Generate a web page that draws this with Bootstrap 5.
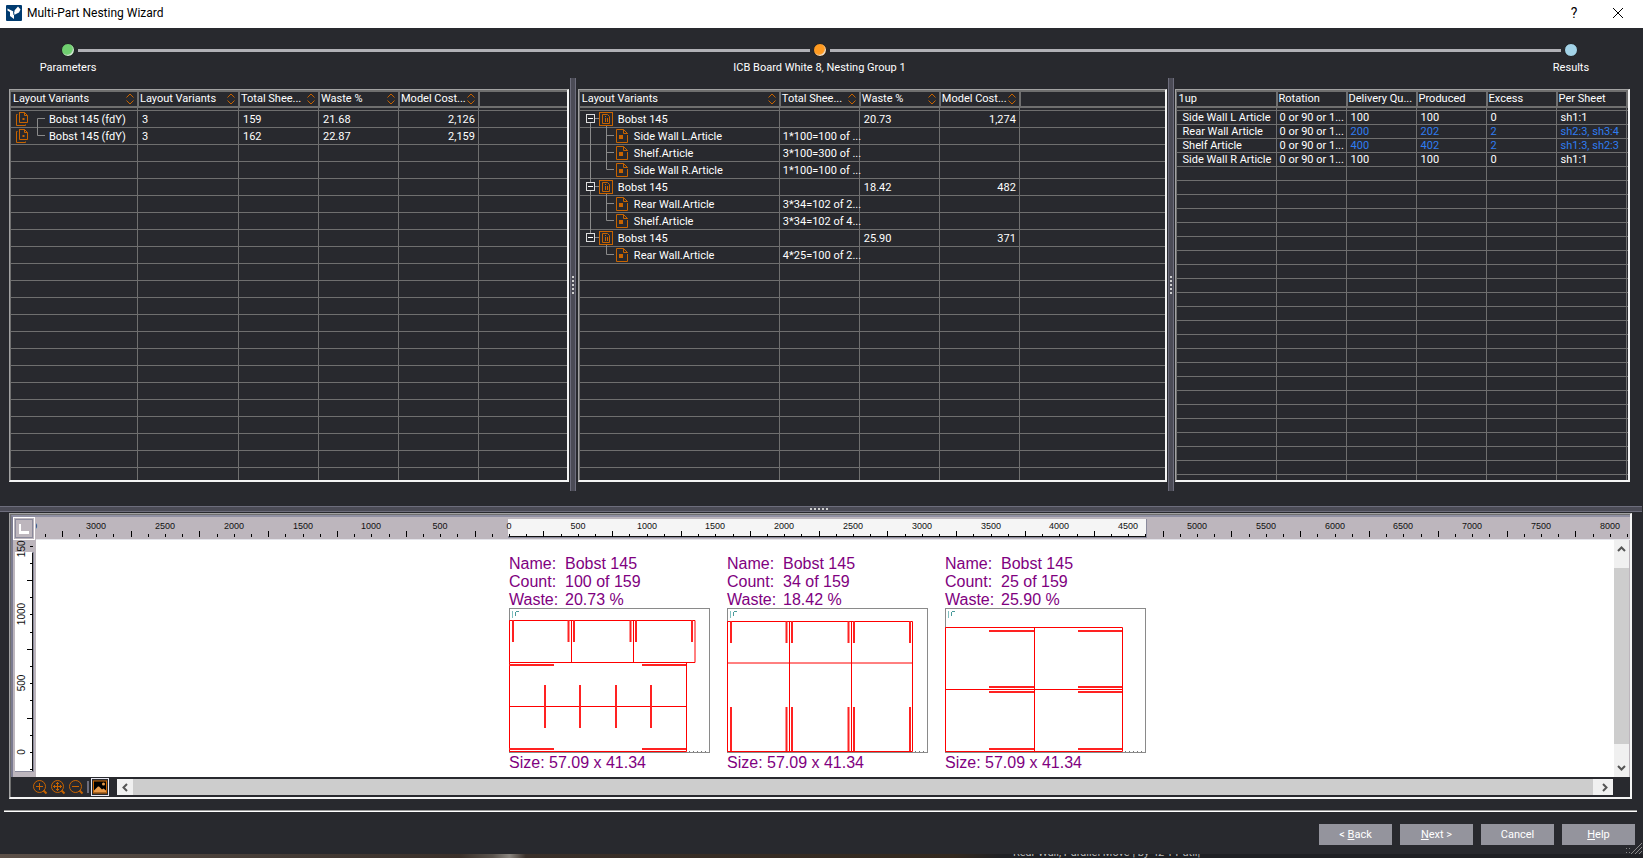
<!DOCTYPE html>
<html lang="en">
<head>
<meta charset="utf-8">
<meta name="viewport" content="width=device-width, initial-scale=1">
<title>Multi-Part Nesting Wizard</title>
<link rel="stylesheet" href="https://cdn.jsdelivr.net/npm/bootstrap@5.3.0/dist/css/bootstrap.min.css">
<style>
:root { --bg:#28292e; --grid:#6f6f6f; --edge:#a2a2a2; --mauve:#bdb6bd; }
body { background:var(--bg); color:#fff; font:11px/14px Roboto, "Liberation Sans", sans-serif; overflow:hidden; }
svg { display:block; }
button { font:inherit; }

.title-bar { height:28px; background:#fff; color:#000; padding:0 15px 3px 6px; }
.title-bar h1 { font-size:12px; line-height:16px; font-weight:400; padding-left:5px; }
.title-bar button { width:20px; height:20px; font-size:14px; line-height:20px; }
.title-bar .tools { gap:24px; }

.stepper { padding:15px 4px 3px 0; }
.stepper .track { padding:0 61px; gap:3px; }
.stepper .dot { width:14px; height:14px; border-radius:50%; border:1px solid #1e1f22; box-shadow:inset -1px -1px 1px #e8e8e8; }
.stepper .dot.done { background:#6fcf6f; }
.stepper .dot.now { background:#ff9a20; }
.stepper .dot.next { background:#a3d3e8; box-shadow:none; }
.stepper .rail { height:3px; background:#b1b1b6; }
.stepper .names { padding-top:4px; }
.stepper .names .side { width:136px; }

.split { padding:0 13px 0 9px; }
.pane { margin:11px 0 9px; border:1px solid var(--edge); border-right:2px solid #f4f4f4; border-bottom:2px solid #f4f4f4; min-width:0; overflow:hidden; }
.pane-a { flex:560 1 0; } .pane-b { flex:589 1 0; margin-left:2px; } .pane-c { flex:455 1 0; margin-left:1px; }
.bar-v { width:6px; margin-left:1px; background:#4b4b56; border:solid #6d6d7c; border-width:0 1px; }
.bar-h { height:6px; margin:15px 1px 1px 0; padding-right:4px; background:#4b4b56; border:solid #6d6d7c; border-width:1px 0; }
.grip-dots i { width:2px; height:2px; background:#d0d0d0; }
.bar-v.grip-dots, .bar-h.grip-dots { gap:2px; }

.grid { table-layout:fixed; width:100%; border-collapse:separate; border-spacing:0; white-space:nowrap; }
.grid th, .grid td { padding:0; vertical-align:middle; }
.grid th { height:18px; font-weight:400; border:solid var(--grid); border-width:2px 0 2px 2px; padding:0 3px 0 1px; line-height:14px; }
.grid th:first-child { border-left-width:1px; padding-left:2px; }
.grid td { border-left:1px solid var(--grid); border-bottom:1px solid var(--grid); padding:0 0 0 4px; line-height:13px; height:17px; }
.grid td.sum { padding-left:3px; }
.grid td.text-end { padding-right:3px; }
.grid .gap td { height:3px; }
.grid .last td { height:12px; border-bottom:0; }
.grid td.tree { padding:0; }
.grid td.tree svg { overflow:visible; flex:none; }
.grid td.tree > div { height:16px; }
.grid.dense td { height:14px; }
.grid.dense .gap td { height:3px; }
.grid.dense .last td { height:5px; }
.grid.dense td:first-child { padding-left:6px; }
.grid .stub, .grid td:last-child:empty { padding:0; }
.diff { color:#2f7df0; }

.viewer { margin:0 11px 0 9px; border:1px solid var(--edge); border-right:2px solid #f4f4f4; border-bottom:2px solid #f4f4f4; }
.viewer-in { border:solid var(--grid); border-width:1px 0 0 1px; }
.stage { display:grid; grid-template-columns:23px 1fr 16px; grid-template-rows:23px auto; background:var(--mauve); border:solid #7b7b90; border-width:2px 0 0 2px; border-top-color:#8f8fa2; }
.corner { width:22px; height:23px; background:var(--mauve); border:1px solid #fff; outline:1px solid #8a8a9c; outline-offset:-3px; padding:0; }
.ruler-x { grid-column:2 / 4; height:23px; width:100%; }
.ruler-y { width:23px; height:100%; }
.ruler-x text, .ruler-y text { font-size:10px; font-family:"Liberation Sans", sans-serif; fill:#111; text-anchor:middle; }
.ruler-x text { font-size:9px; }
.canvas { background:#fff; padding:15px 0 5px 473px; gap:16px; color:#800080; font:16px/18px "Liberation Sans", sans-serif; overflow:hidden; white-space:nowrap; min-width:0; }
.canvas dl { display:grid; grid-template-columns:56px auto; margin:0; }
.canvas dt { font-weight:400; } .canvas dd { margin:0; }
.canvas svg { width:202px; height:145px; margin:-1px 0 1px; }
.scroll { background:#f0f0f0; }
.scroll button { border:0; background:#f0f0f0; padding:0; }
.scroll .thumb { background:#cdcdcd; }
.scroll-v { width:15px; }
.scroll-v button { height:18px; } .scroll-v .thumb { margin:10px 0 15px; }
.scroll-h { height:16px; margin:2px 17px 2px 8px; }
.scroll-h button { width:16px; } .scroll-h .thumb { margin-right:4px; }
.tool-row { height:20px; padding-left:20px; }
.tool-row .tool { width:18px; height:18px; padding:0; border:0; background:none; }
.tool-row .sep { width:2px; height:12px; background:#6d6d7c; margin:0 2px; }
.tool-row .tool.on { border:1px solid #e6e6f0; }

.rule { height:2px; margin:11px 6px 12px 4px; background:#fff; border-top:1px solid #9a9a9a; }
.actions { padding-right:8px; gap:8px; }
.actions button { width:73px; height:21px; border:0; border-radius:0; background:#94949d; color:#fff; padding:1px 0 0; line-height:20px; }
.resize { width:16px; height:12px; right:1px; bottom:4px; }
.behind { height:4px; margin-top:9px; overflow:hidden; background:linear-gradient(90deg,#5c5048 0,#453c36 17%,#3a302a 28%,#5a534d 30%,#8a857f 31%,#3a302a 32%,#33291f 58%,#1f2024 61%,#1f2024 100%); color:#b8b8b8; }
.behind span { margin-left:1013px; margin-top:-7px; line-height:11px; white-space:nowrap; }
</style>
</head>
<body>
<header class="title-bar d-flex align-items-center">
  <svg width="16" height="16" viewBox="0 0 16 16" aria-hidden="true"><rect width="16" height="16" rx="1" fill="#003b70"/><path d="M1.500 3.500L7.500 6.500L12 1.500L14.500 4.500L13 7.500L8 10V14L4 11V7L1.500 5.500z" fill="#fff"/><path d="M7.500 1L8 7M8 10L7.500 6.500" stroke="#003b70"/></svg>
  <h1 class="m-0 me-auto">Multi-Part Nesting Wizard</h1>
  <div class="tools d-flex">
    <button type="button" class="btn p-0 border-0 text-black d-flex align-items-center justify-content-center" aria-label="Help on this window">?</button>
    <button type="button" class="btn p-0 border-0 d-flex align-items-center justify-content-center" aria-label="Close"><svg width="10" height="10" viewBox="0 0 10 10" stroke="#000"><path d="M0 0L10 10M10 0L0 10"/></svg></button>
  </div>
</header>

<nav class="stepper" aria-label="Wizard steps">
  <div class="track d-flex align-items-center">
    <span class="dot done"></span><span class="rail flex-fill"></span><span class="dot now"></span><span class="rail flex-fill"></span><span class="dot next"></span>
  </div>
  <div class="names d-flex text-center">
    <span class="side">Parameters</span><span class="flex-fill">ICB Board White 8, Nesting Group 1</span><span class="side">Results</span>
  </div>
</nav>

<main>
  <div class="split d-flex">
    <section class="pane pane-a"><table class="grid" id="variants"></table></section>
    <div class="bar-v grip-dots d-flex flex-column align-items-center justify-content-center"><i></i><i></i><i></i><i></i><i></i></div>
    <section class="pane pane-b"><table class="grid" id="sheets"></table></section>
    <div class="bar-v grip-dots d-flex flex-column align-items-center justify-content-center"><i></i><i></i><i></i><i></i><i></i></div>
    <section class="pane pane-c"><table class="grid dense" id="articles"></table></section>
  </div>
  <div class="bar-h grip-dots d-flex align-items-center justify-content-center"><i></i><i></i><i></i><i></i><i></i></div>

  <section class="viewer"><div class="viewer-in">
    <div class="stage">
      <button type="button" class="corner" aria-label="Set origin"><svg width="20" height="21" viewBox="0 0 20 21"><path d="M5 6h2v7h8v3H5z" fill="#fff"/></svg></button>
      <svg class="ruler-x" id="rulerX"></svg>
      <svg class="ruler-y" id="rulerY"></svg>
      <div class="canvas d-flex align-items-start" id="canvas"></div>
      <div class="scroll scroll-v d-flex flex-column">
        <button type="button" aria-label="Scroll up"><svg class="m-auto" width="9" height="6" viewBox="0 0 9 6" fill="none" stroke="#555" stroke-width="2"><path d="M1 5l3.500-3.500L8 5"/></svg></button>
        <span class="thumb flex-fill"></span>
        <button type="button" aria-label="Scroll down"><svg class="m-auto" width="9" height="6" viewBox="0 0 9 6" fill="none" stroke="#555" stroke-width="2"><path d="M1 1l3.500 3.500L8 1"/></svg></button>
      </div>
    </div>
    <div class="tool-row d-flex align-items-center">
      <button type="button" class="tool" aria-label="Zoom in"><svg width="18" height="18" viewBox="0 0 18 18" fill="none" stroke="#c86400"><circle cx="8.500" cy="8.500" r="6"/><path d="M5 8.500h7M8.500 5v7"/><path d="M12.500 12.500l3 3" stroke-width="2"/></svg></button>
      <button type="button" class="tool" aria-label="Zoom to fit"><svg width="18" height="18" viewBox="0 0 18 18" fill="none" stroke="#c86400"><circle cx="8.500" cy="8.500" r="6"/><path d="M4 8.500h9M8.500 4v9M7 5.500h3M7 11.500h3M5.500 7v3M11.500 7v3"/><path d="M12.500 12.500l3 3" stroke-width="2"/></svg></button>
      <button type="button" class="tool" aria-label="Zoom out"><svg width="18" height="18" viewBox="0 0 18 18" fill="none" stroke="#c86400"><circle cx="8.500" cy="8.500" r="6"/><path d="M5 8.500h7"/><path d="M12.500 12.500l3 3" stroke-width="2"/></svg></button>
      <span class="sep"></span>
      <button type="button" class="tool on" aria-label="Show picture"><svg width="16" height="16" viewBox="0 0 16 16"><rect x="1.500" y="2" width="13" height="12" fill="#000" stroke="#c86400"/><path d="M2 13.500v-2l4-4 1 0 3 3 1.500-1 2.500 2v2z" fill="#e89a4a"/><circle cx="11.500" cy="5" r="1.500" fill="#e89a4a"/></svg></button>
      <div class="scroll scroll-h d-flex flex-fill">
        <button type="button" aria-label="Scroll left"><svg class="m-auto" width="6" height="9" viewBox="0 0 6 9" fill="none" stroke="#555" stroke-width="2"><path d="M5 1L1.500 4.500 5 8"/></svg></button>
        <span class="thumb flex-fill"></span>
        <button type="button" aria-label="Scroll right"><svg class="m-auto" width="6" height="9" viewBox="0 0 6 9" fill="none" stroke="#555" stroke-width="2"><path d="M1 1l3.500 3.500L1 8"/></svg></button>
      </div>
    </div>
  </div></section>
</main>

<footer class="position-relative">
  <div class="rule"></div>
  <div class="actions d-flex justify-content-end">
    <button type="button">&lt; <u>B</u>ack</button><button type="button"><u>N</u>ext &gt;</button><button type="button">Cancel</button><button type="button"><u>H</u>elp</button>
  </div>
  <svg class="resize position-absolute" viewBox="0 0 16 12" stroke="#8a8a8a"><path d="M5 12L16 1M9 12l7-7M13 12l3-3"/><path d="M0 6.500h1M3 6.500h1M0 10.500h1M3 10.500h1"/></svg>
  <div class="behind d-flex"><span>Rear Wall, Parallel Move | by 42 TT util|</span></div>
</footer>

<script src="https://cdn.jsdelivr.net/npm/bootstrap@5.3.0/dist/js/bootstrap.bundle.min.js"></script>
<script>
const ORANGE = '#c86400', LINE = '#8a8a8a';
const sorter = `<svg width="8" height="12" viewBox="0 0 8 12" fill="none" stroke="${ORANGE}"><path d="M.5 4.500L4 1l3.500 3.500M.5 7.500L4 11l3.500-3.500"/></svg>`;

// Tree cells: branch lines and icons of one row, then its name
const variantCell = (name, last) => `<div class="d-flex align-items-center"><svg width="38" height="16" fill="none" stroke="${ORANGE}">
  <path d="M8 1.500H13.500L16.500 4.500V11.500H8.500V1.500M13.500 1.500V4.500H16.500M6.500 3.500H5.500V14.500H14.500V13.500"/><path d="M11.500 7h2v2h-2z" fill="${ORANGE}" stroke="none"/>
  <path stroke="${LINE}" d="${last ? 'M26.500-1V7.500H34' : 'M26.500 16V7.500H34'}"/></svg>${name}</div>`;
const sheetCell = (name, pos) => `<div class="d-flex align-items-center"><svg width="38" height="16" fill="none" stroke="${LINE}">
  ${pos !== 'first' ? '<path d="M10.500-1V3"/>' : ''}${pos !== 'last' ? '<path d="M10.500 12V17"/>' : ''}<path d="M15 7.500h4M26.500 15v2"/>
  <rect x="6.500" y="3.500" width="8" height="8" stroke="#ddd"/><path d="M8 7.500h5" stroke="#fff"/>
  <rect x="19.500" y="1.500" width="13" height="13" stroke="${ORANGE}"/><path d="M22.500 3.500H27.500L29.500 5.500V12.500H22.500zM25.500 5v1M25.500 7v4M27.500 7v4" stroke="${ORANGE}"/></svg>${name}</div>`;
const articleCell = (name, last, trunk) => `<div class="d-flex align-items-center"><svg width="54" height="16" fill="none" stroke="${LINE}">
  ${trunk ? '<path d="M10.500-1V17"/>' : ''}<path d="M26.500-1V${last ? 7.5 : 17}M26.500 7.500H34"/>
  <path d="M43 1.500H36.500V14.500H47.500V7M43.500 1.500V5.500H47.500zL47.500 5.500" stroke="${ORANGE}"/><rect x="39" y="7" width="4" height="4" fill="${ORANGE}" stroke="none"/></svg>${name}</div>`;

function fill(id, cols, heads, rows, count, sortable) {
  const cells = r => cols.map((_, i) => {
    const v = r[i] ?? '', o = typeof v === 'object' ? v : { t: v };
    return `<td class="${o.c ?? ''}">${o.t}</td>`;
  }).join('');
  const body = Array.from({ length: count }, (_, i) => `<tr>${cells(rows[i] ?? [])}</tr>`).join('');
  document.getElementById(id).innerHTML =
    `<colgroup>${cols.map(w => `<col${w ? ` style="width:${w}px"` : ''}>`).join('')}</colgroup>
    <thead><tr>${cols.map((_, i) => `<th class="${heads[i] ? '' : 'stub'}">${heads[i] ? `<div class="d-flex justify-content-between align-items-center"><span>${heads[i]}</span>${sortable ? sorter : ''}</div>` : ''}</th>`).join('')}</tr></thead>
    <tbody><tr class="gap">${cells([])}</tr>${body}<tr class="last">${cells([])}</tr></tbody>`;
}
const T = t => ({ t, c: 'tree' }), R = t => ({ t, c: 'text-end' }), D = t => ({ t, c: 'diff' }), Q = t => ({ t, c: 'sum' });

fill('variants', [127, 101, 80, 80, 80, 0], ['Layout Variants', 'Layout Variants', 'Total Shee...', 'Waste %', 'Model Cost...'], [
  [T(variantCell('Bobst 145 (fdY)', false)), '3', '159', '21.68', R('2,126')],
  [T(variantCell('Bobst 145 (fdY)', true)), '3', '162', '22.87', R('2,159')]
], 21, true);
fill('sheets', [200, 80, 80, 80, 0], ['Layout Variants', 'Total Shee...', 'Waste %', 'Model Cost...'], [
  [T(sheetCell('Bobst 145', 'first')), '', '20.73', R('1,274')],
  [T(articleCell('Side Wall L.Article', false, true)), Q('1*100=100 of ...')],
  [T(articleCell('Shelf.Article', false, true)), Q('3*100=300 of ...')],
  [T(articleCell('Side Wall R.Article', true, true)), Q('1*100=100 of ...')],
  [T(sheetCell('Bobst 145', 'mid')), '', '18.42', R('482')],
  [T(articleCell('Rear Wall.Article', false, true)), Q('3*34=102 of 2...')],
  [T(articleCell('Shelf.Article', true, true)), Q('3*34=102 of 4...')],
  [T(sheetCell('Bobst 145', 'last')), '', '25.90', R('371')],
  [T(articleCell('Rear Wall.Article', true, false)), Q('4*25=100 of 2...')]
], 21, true);
fill('articles', [100, 70, 70, 70, 70, 70, 0], ['1up', 'Rotation', 'Delivery Qu...', 'Produced', 'Excess', 'Per Sheet'], [
  ['Side Wall L Article', Q('0 or 90 or 1...'), '100', '100', '0', 'sh1:1'],
  ['Rear Wall Article', Q('0 or 90 or 1...'), D('200'), D('202'), D('2'), D('sh2:3, sh3:4')],
  ['Shelf Article', Q('0 or 90 or 1...'), D('400'), D('402'), D('2'), D('sh1:3, sh2:3')],
  ['Side Wall R Article', Q('0 or 90 or 1...'), '100', '100', '0', 'sh1:1']
], 26, false);

// Rulers: one tick for each 125 units, a long one at odd 250s, a number at each 500
const STEP = 68.8 / 4;
let rx = '<rect x="472" y="2" width="639" height="19" fill="#8a8a9c"/><rect x="472" y="2" width="638" height="17" fill="#f5f5f5"/><path d="M473 19.500H1110" stroke="#111"/>';
for (let i = -28; i < 70; i++) {
  const x = Math.round(473 + i * STEP);
  rx += `<path d="M${x + .5} ${((i % 4) + 4) % 4 === 2 ? 14 : 17}V20" stroke="#000"/>`;
  if (i % 4 === 0) rx += `<text x="${x}" y="12">${Math.abs(i * 125)}</text>`;
}
rulerX.innerHTML = rx + '<path d="M0 22.500H1700" stroke="#e4e4ea"/>';
let ry = '<rect x="2" y="12" width="19" height="220" fill="#8a8a9c"/><rect x="2" y="12" width="17" height="219" fill="#fff"/><path d="M19.500 13V231" stroke="#111"/>';
for (let i = -1; i < 13; i++) {
  const y = Math.round(212 - i * STEP);
  ry += `<path d="M${((i % 4) + 4) % 4 === 2 ? 14 : 17} ${y + .5}H20" stroke="#000"/>`;
  if (i >= 0 && i % 4 === 0) ry += `<text transform="translate(12 ${y}) rotate(-90)">${i * 125}</text>`;
}
rulerY.innerHTML = ry;

// Sheet drawings
const v = (xs, a, b) => xs.map(x => `M${x} ${a}V${b}`).join('');
const h = (ys, a, b) => ys.map(y => `M${a} ${y}H${b}`).join('');
const S = [4, 59.5, 65, 121.5, 127, 183];
const layouts = [
  { count: '100 of 159', waste: '20.73 %', end: 180,
    thin: 'M.5 12.500H186V54.500H.5zM.5 55V143.500H177.500V54' + v([62.5, 124.5], 12, 54) + h([98.5], 0, 177),
    slot: v(S, 12, 34) + h([57, 141], 0, 45) + h([57, 141], 133, 177) + v([36, 71, 107, 142], 77, 120) },
  { count: '34 of 159', waste: '18.42 %', end: 188,
    thin: 'M.5 13.500H185.500V143.500H.5z' + v([62.5, 124.5], 13, 143) + h([55], 0, 185),
    slot: v(S, 13, 35) + v(S, 99, 143) },
  { count: '25 of 159', waste: '25.90 %', end: 180,
    thin: 'M.5 19.500H177.500V143.500H.5z' + v([89.5], 19, 143) + h([81.5], 0, 177),
    slot: h([23, 79, 84, 141], 44, 89) + h([23, 79, 84, 141], 133, 177) }
];
canvas.innerHTML = layouts.map(l => `<article><dl><dt>Name:</dt><dd>Bobst 145</dd><dt>Count:</dt><dd>${l.count}</dd><dt>Waste:</dt><dd>${l.waste}</dd></dl>
  <svg viewBox="0 0 202 145" fill="none"><rect x=".5" y=".5" width="200" height="144" stroke="#8a8a8a"/>
  <path d="M3.500 3V10" stroke="#80c0c0"/><path d="M6.500 4v4M7 3.500h3" stroke="#4a9a9a"/>
  <path d="${h([143.5], l.end, 198)}" stroke="#777" stroke-dasharray="1 3"/>
  <path d="${l.thin}" stroke="#f00"/><path d="${l.slot}" stroke="#f22" stroke-width="2"/></svg>
  <div>Size: 57.09 x 41.34</div></article>`).join('');
</script>
</body>
</html>
